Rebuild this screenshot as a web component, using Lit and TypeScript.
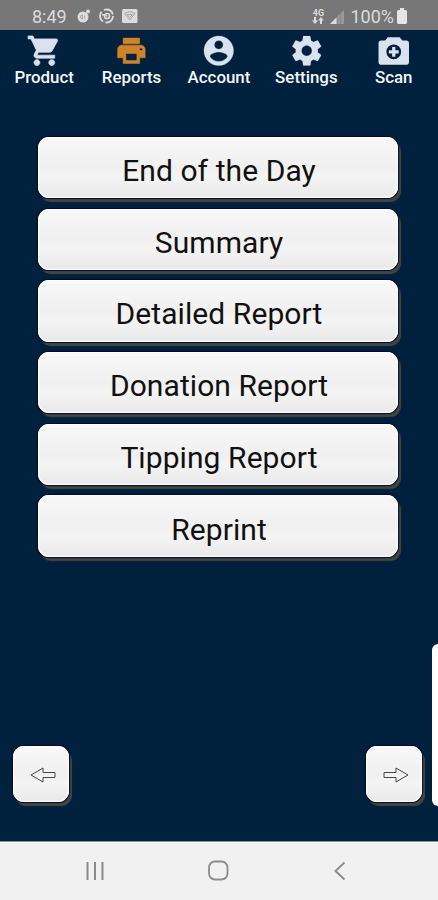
import { LitElement, html, css, svg } from "lit";
import { customElement } from "lit/decorators.js";

const ICONS = {
  cart: svg`<path transform="translate(.4 0)" stroke-width=".5" d="M7 18c-1.100 0-1.990.9-1.990 2S5.900 22 7 22s2-.9 2-2-.9-2-2-2zM1 2v2h2l3.600 7.590-1.350 2.450c-.16.28-.25.61-.25.96 0 1.100.9 2 2 2h12v-2H7.420c-.14 0-.25-.11-.25-.25l.03-.12.9-1.630h7.450c.75 0 1.410-.41 1.750-1.030l3.580-6.490c.08-.14.12-.31.12-.48 0-.55-.45-1-1-1H5.210l-.94-2H1zm16 16c-1.100 0-1.990.9-1.990 2s.89 2 1.990 2 2-.9 2-2-.9-2-2-2z"/>`,
  print: svg`<path transform="translate(.6 .6) scale(.93 .95)" stroke-width=".4" d="M19 8H5c-1.660 0-3 1.340-3 3v6h4v4h12v-4h4v-6c0-1.660-1.340-3-3-3zm-3 11H8v-5h8v5zm3-7c-.55 0-1-.45-1-1s.45-1 1-1 1 .45 1 1-.45 1-1 1zm-1-9H6v4h12V3z"/>`,
  account: svg`<path stroke-width=".2" d="M12 2C6.480 2 2 6.480 2 12s4.480 10 10 10 10-4.480 10-10S17.520 2 12 2zm0 3c1.660 0 3 1.340 3 3s-1.340 3-3 3-3-1.340-3-3 1.340-3 3-3zm0 14.200c-2.500 0-4.710-1.280-6-3.220.03-1.990 4-3.080 6-3.080 1.990 0 5.970 1.090 6 3.080-1.290 1.940-3.500 3.220-6 3.220z"/>`,
  gear: svg`<path stroke-width=".1" d="M19.430 12.980c.04-.32.07-.64.07-.98s-.03-.66-.07-.98l2.110-1.650c.19-.15.24-.42.12-.64l-2-3.460c-.12-.22-.39-.3-.61-.22l-2.490 1c-.52-.4-1.080-.73-1.690-.98l-.38-2.650C14.460 2.180 14.250 2 14 2h-4c-.25 0-.46.18-.49.42l-.38 2.650c-.61.25-1.170.59-1.690.98l-2.490-1c-.23-.09-.49 0-.61.22l-2 3.460c-.13.22-.07.49.12.64l2.110 1.650c-.04.32-.07.65-.07.98s.03.66.07.98l-2.110 1.650c-.19.15-.24.42-.12.64l2 3.460c.12.22.39.3.61.22l2.490-1c.52.4 1.080.73 1.690.98l.38 2.650c.03.24.24.42.49.42h4c.25 0 .46-.18.49-.42l.38-2.650c.61-.25 1.170-.59 1.690-.98l2.490 1c.23.09.49 0 .61-.22l2-3.460c.12-.22.07-.49-.12-.64l-2.110-1.650zM12 15.500c-1.930 0-3.500-1.570-3.500-3.500s1.570-3.500 3.500-3.500 3.500 1.570 3.500 3.500-1.570 3.500-3.500 3.500z"/>`,
  camera: svg`<path stroke="none" fill-rule="evenodd" d="M8 2.800 6.200 5H3.600A1.900 1.900 0 0 0 1.700 6.900v12.700a1.900 1.900 0 0 0 1.900 1.900h16.800a1.900 1.900 0 0 0 1.900-1.900V6.900A1.900 1.900 0 0 0 20.400 5h-2.600L16 2.800zM12 7.700a5 5 0 1 1 0 10 5 5 0 0 1 0-10z"/><path stroke="none" d="M10.900 9.400h2.200v2.200h2.200v2.200h-2.200V16h-2.200v-2.200H8.700v-2.200h2.200z"/>`,
};

const TABS: { label: string; icon: keyof typeof ICONS; active?: boolean }[] = [
  { label: "Product", icon: "cart" },
  { label: "Reports", icon: "print", active: true },
  { label: "Account", icon: "account" },
  { label: "Settings", icon: "gear" },
  { label: "Scan", icon: "camera" },
];

const REPORTS = ["End of the Day", "Summary", "Detailed Report", "Donation Report", "Tipping Report", "Reprint"];

@customElement("app-root")
export class AppRoot extends LitElement {
  static styles = css`
    :host { display: flex; flex-direction: column; position: relative; height: 900px; overflow: hidden; background: #00213e; font-family: Roboto, sans-serif; }
    svg { display: block; }
    .status { height: 30px; flex: none; box-sizing: border-box; background: #777; color: #dcdcdc; display: flex; align-items: center; justify-content: space-between; padding: 2px 31px 0 32px; font-size: 18px; }
    .group { display: flex; align-items: center; }
    .time { width: 45px; }
    .network { display: flex; flex-direction: column; align-items: center; width: 14px; font-size: 9px; line-height: 8px; font-weight: 700; margin-right: 5px; }
    .percent { margin: 0 3px 0 6px; letter-spacing: 0; }
    .tabs { display: grid; grid-template-columns: repeat(5, 87.4px); height: 62px; flex: none; padding: 3px 0 0 .5px; box-sizing: border-box; }
    .tab { display: flex; flex-direction: column; align-items: center; color: #f4f6fa; font-size: 16.900px; font-weight: 500; line-height: 17px; }
    .tab svg { width: 35.500px; height: 35.500px; fill: #d9e2ee; stroke: #d9e2ee; }
    .tab.active svg { fill: #d0842a; stroke: #d0842a; }
    .list { display: flex; flex-direction: column; gap: 10.700px; padding: 45px 40px 0 37.500px; flex: 1; }
    .button { border: 0; box-sizing: border-box; padding: 0; border-radius: 11px; color: #111; background: linear-gradient(#f8f8f8, #f0f0f0 50%, #f4f4f4 65%, #e9e9e9); box-shadow: inset 0 0 1px 1px #fff, 0 0 1px .5px #000b28, 2.500px 4px 1px #454640; font-family: inherit; }
    .report { height: 61.200px; margin-bottom: -.2px; font-size: 30px; letter-spacing: .08px; padding: 6px 0 0 2.500px; }
    .pager { display: flex; justify-content: space-between; padding: 0 16px 39.500px 13px; }
    .arrow { width: 56px; height: 56px; display: grid; place-items: center; }
    .arrow svg { margin: 3px 0 0 4px; }
    .edge { position: absolute; right: -8px; top: 643.500px; width: 14px; height: 162px; background: #fff; border-radius: 6px; }
    .nav { flex: none; height: 59px; box-sizing: border-box; background: #f1f1f1; border-top: 1px solid #8090a4; box-shadow: inset 0 1px #fafafa; padding: 16.500px 87px 0 84px; display: flex; justify-content: space-between; }
  `;

  render() {
    return html`
      <header class="status">
        <div class="group"><span class="time">8:49</span>
          <svg width="62" height="18" viewBox="0 0 62 18" fill="none" stroke="#dcdcdc">
            <circle cx="6" cy="10" r="5.500" fill="#dcdcdc" stroke="none"/><circle cx="11" cy="4.500" r="1.900" fill="#dcdcdc" stroke="none"/><path d="M3.500 9l2-1v4l-2-1zM7.500 8.500v3" stroke="#aaa"/>
            <circle cx="29.500" cy="9" r="6.500" stroke-width="1.800" stroke-dasharray="11 2.600"/><circle cx="30" cy="9" r="2.500" stroke-width="1.700"/><path d="M25 7.500l5 1.500" stroke-width="1.500"/>
            <rect x="45" y="2" width="15.500" height="14" rx="1.500" fill="#dcdcdc" stroke="none"/><path d="M47.500 6.500q5.200-3.500 10.400 0L52.700 13zM50 7.500h5.500l-2.800 3z" stroke="#a5a5a5"/>
          </svg>
        </div>
        <div class="group">
          <div class="network"><span>4G</span>
            <svg width="12" height="7" viewBox="0 0 12 7" fill="#dcdcdc"><path d="M0 3.500h2V0h2v3.500h2L3 7zM6.200 3.500 9 0l2.800 3.500h-1.800V7H8V3.500z"/></svg>
          </div>
          <svg width="14" height="15" viewBox="0 0 14 15"><path d="M0 15 14 1v14z" fill="#999"/><path d="M0 15l6.500-6.500V15z" fill="#dcdcdc"/><path d="M7.500 7v8M10.500 4v11" stroke="#808080" stroke-width=".8"/></svg>
          <span class="percent">100%</span>
          <svg width="10" height="16" viewBox="0 0 10 16"><path d="M3 0h4v2h2l1 1v12l-1 1H1l-1-1V3l1-1h2z" fill="#e6e6e6"/></svg>
        </div>
      </header>
      <nav class="tabs">${TABS.map((t) => html`<div class="tab ${t.active ? "active" : ""}"><svg viewBox="0 0 24 24">${ICONS[t.icon]}</svg><span>${t.label}</span></div>`)}</nav>
      <main class="list">${REPORTS.map((r) => html`<button class="button report">${r}</button>`)}</main>
      <div class="pager">
        <button class="button arrow"><svg width="26" height="16" viewBox="0 0 26 16" fill="none" stroke="#444"><path d="M1 8l12-7v4.500h12v5H13V15z"/></svg></button>
        <button class="button arrow"><svg width="26" height="16" viewBox="0 0 26 16" fill="none" stroke="#444"><path d="M25 8L13 1v4.500H1v5h12V15z"/></svg></button>
      </div>
      <div class="edge"></div>
      <footer class="nav">
        <svg width="22" height="24" viewBox="0 0 22 24" stroke="#8c8c8c" stroke-width="2"><path d="M3.500 3v18M11 3v18M18.500 3v18"/></svg>
        <svg width="22" height="24" viewBox="0 0 22 24" fill="none" stroke="#8c8c8c" stroke-width="1.800"><rect x="1" y="2.500" width="18.500" height="18" rx="6"/></svg>
        <svg width="20" height="24" viewBox="0 0 20 24" fill="none" stroke="#8c8c8c" stroke-width="1.900"><path d="M13.500 3.500 4.500 12l9 8.500"/></svg>
      </footer>
    `;
  }
}
